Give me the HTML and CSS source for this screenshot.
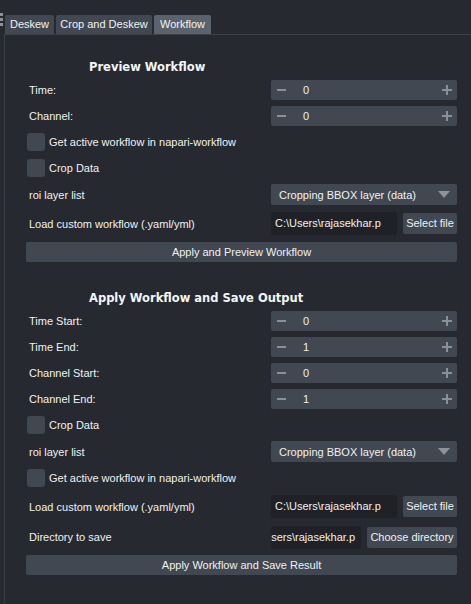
FILE: index.html
```html
<!DOCTYPE html>
<html>
<head>
<meta charset="utf-8">
<link rel="stylesheet" href="styles.css">
</head>
<body>
<div class="app">
  <div class="grip"><i></i><i></i><i></i></div>
  <div class="tabwidget">
    <div class="tabbar">
      <div class="tab t1">Deskew</div>
      <div class="tab t2">Crop and Deskew</div>
      <div class="tab t3 active">Workflow</div>
    </div>
    <div class="pane">
      <section class="section">
        <div class="heading">Preview Workflow</div>
        <div class="row"><span class="label">Time:</span>
          <div class="spin"><svg class="minus" width="10" height="10" viewBox="0 0 10 10"><path d="M0 5H9"/></svg><span class="val">0</span><svg class="plus" width="10" height="10" viewBox="0 0 10 10"><path d="M0 5H10M5 0V10"/></svg></div>
        </div>
        <div class="row"><span class="label">Channel:</span>
          <div class="spin"><svg class="minus" width="10" height="10" viewBox="0 0 10 10"><path d="M0 5H9"/></svg><span class="val">0</span><svg class="plus" width="10" height="10" viewBox="0 0 10 10"><path d="M0 5H10M5 0V10"/></svg></div>
        </div>
        <div class="check"><span class="box"></span><span>Get active workflow in napari-workflow</span></div>
        <div class="check"><span class="box"></span><span>Crop Data</span></div>
        <div class="row tall"><span class="label">roi layer list</span>
          <div class="combo"><span>Cropping BBOX layer (data)</span><svg width="12" height="7" viewBox="0 0 12 7"><polygon points="0,0 12,0 6,7"/></svg></div>
        </div>
        <div class="row load"><span class="label">Load custom workflow (.yaml/yml)</span>
          <div class="filepick"><div class="lineedit">C:\Users\rajasekhar.p</div><div class="btn small">Select file</div></div>
        </div>
        <div class="btn wide">Apply and Preview Workflow</div>
      </section>

      <section class="section second">
        <div class="heading">Apply Workflow and Save Output</div>
        <div class="row"><span class="label">Time Start:</span>
          <div class="spin"><svg class="minus" width="10" height="10" viewBox="0 0 10 10"><path d="M0 5H9"/></svg><span class="val">0</span><svg class="plus" width="10" height="10" viewBox="0 0 10 10"><path d="M0 5H10M5 0V10"/></svg></div>
        </div>
        <div class="row"><span class="label">Time End:</span>
          <div class="spin"><svg class="minus" width="10" height="10" viewBox="0 0 10 10"><path d="M0 5H9"/></svg><span class="val">1</span><svg class="plus" width="10" height="10" viewBox="0 0 10 10"><path d="M0 5H10M5 0V10"/></svg></div>
        </div>
        <div class="row"><span class="label">Channel Start:</span>
          <div class="spin"><svg class="minus" width="10" height="10" viewBox="0 0 10 10"><path d="M0 5H9"/></svg><span class="val">0</span><svg class="plus" width="10" height="10" viewBox="0 0 10 10"><path d="M0 5H10M5 0V10"/></svg></div>
        </div>
        <div class="row"><span class="label">Channel End:</span>
          <div class="spin"><svg class="minus" width="10" height="10" viewBox="0 0 10 10"><path d="M0 5H9"/></svg><span class="val">1</span><svg class="plus" width="10" height="10" viewBox="0 0 10 10"><path d="M0 5H10M5 0V10"/></svg></div>
        </div>
        <div class="check"><span class="box"></span><span>Crop Data</span></div>
        <div class="row tall"><span class="label">roi layer list</span>
          <div class="combo"><span>Cropping BBOX layer (data)</span><svg width="12" height="7" viewBox="0 0 12 7"><polygon points="0,0 12,0 6,7"/></svg></div>
        </div>
        <div class="check"><span class="box"></span><span>Get active workflow in napari-workflow</span></div>
        <div class="row load"><span class="label">Load custom workflow (.yaml/yml)</span>
          <div class="filepick"><div class="lineedit">C:\Users\rajasekhar.p</div><div class="btn small">Select file</div></div>
        </div>
        <div class="row dir"><span class="label">Directory to save</span>
          <div class="filepick dirpick"><div class="lineedit scrolled"><span>C:\Users\rajasekhar.p</span></div><div class="btn small">Choose directory</div></div>
        </div>
        <div class="btn wide">Apply Workflow and Save Result</div>
      </section>
    </div>
  </div>
</div>
</body>
</html>
```

FILE: styles.css
```css
html, body {
  margin: 0;
  padding: 0;
  background: #262930;
  height: 100%;
}

body {
  font-family: "Liberation Sans", Arial, sans-serif;
  font-size: 11px;
  color: #f0f1f2;
  overflow: hidden;
}

.app {
  display: flex;
  height: 604px;
}

.grip {
  width: 4px;
  padding-top: 13px;
  display: flex;
  flex-direction: column;
  gap: 2px;
}

.grip i {
  display: block;
  width: 3px;
  height: 3px;
  background: #8d9299;
}

.tabwidget {
  flex: 1;
  display: flex;
  flex-direction: column;
}

.tabbar {
  display: flex;
  gap: 2px;
  padding: 15px 0 0 1px;
  height: 19px;
}

.tab {
  height: 19px;
  line-height: 19px;
  text-align: center;
  background: #414851;
  border-radius: 2px 2px 0 0;
  color: #f0f1f2;
}

.t1 { width: 49px; }
.t2 { width: 96px; }
.t3 { width: 57px; }

.tab.active {
  background: #5a626c;
}

.pane {
  flex: 1;
  border-top: 1px solid #3c3f47;
  border-left: 1px solid #3c3f47;
  padding: 22px 14px 0 21px;
}

.section {
  display: flex;
  flex-direction: column;
  gap: 6px;
}

.section.second {
  margin-top: 26px;
}

.heading {
  height: 17px;
  line-height: 20px;
  padding-left: 63px;
  font-family: "DejaVu Sans", Verdana, sans-serif;
  font-weight: bold;
  font-size: 11.5px;
  color: #f4f5f6;
}

.row {
  display: grid;
  grid-template-columns: 1fr 186px;
  align-items: center;
  height: 20px;
}

.row.tall { height: 21px; }
.row.load { height: 25px; }
.row.dir { height: 24px; }

.label {
  padding-left: 3px;
  white-space: nowrap;
}

.spin {
  display: flex;
  align-items: center;
  height: 20px;
  background: #414851;
  border-radius: 2px;
  padding: 0 5px 0 6px;
}

.spin svg {
  stroke: #8a9098;
  stroke-width: 2;
  fill: none;
}

.spin .val {
  margin-left: 16px;
}

.spin .plus {
  margin-left: auto;
}

.check {
  display: flex;
  align-items: center;
  gap: 4px;
  height: 20px;
  padding-left: 1px;
}

.box {
  width: 18px;
  height: 18px;
  background: #414851;
  border-radius: 3px;
}

.combo {
  display: flex;
  align-items: center;
  justify-content: space-between;
  height: 21px;
  background: #414851;
  border-radius: 2px;
  padding: 0 7px 0 8px;
}

.combo svg {
  fill: #8d939a;
}

.filepick {
  display: grid;
  grid-template-columns: 126px 54px;
  gap: 6px;
  align-items: center;
}

.filepick.dirpick {
  grid-template-columns: 90px 90px;
}

.lineedit {
  height: 23px;
  line-height: 23px;
  background: #1f2127;
  border-radius: 2px;
  padding-left: 4px;
  white-space: nowrap;
  overflow: hidden;
}

.lineedit.scrolled {
  display: flex;
  justify-content: flex-end;
  padding-left: 0;
  padding-right: 6px;
}

.lineedit.scrolled span {
  flex: none;
}

.btn {
  background: #414851;
  border-radius: 2px;
  text-align: center;
  white-space: nowrap;
}

.btn.small {
  height: 21px;
  line-height: 21px;
}

.btn.wide {
  height: 20px;
  line-height: 20px;
}
```
